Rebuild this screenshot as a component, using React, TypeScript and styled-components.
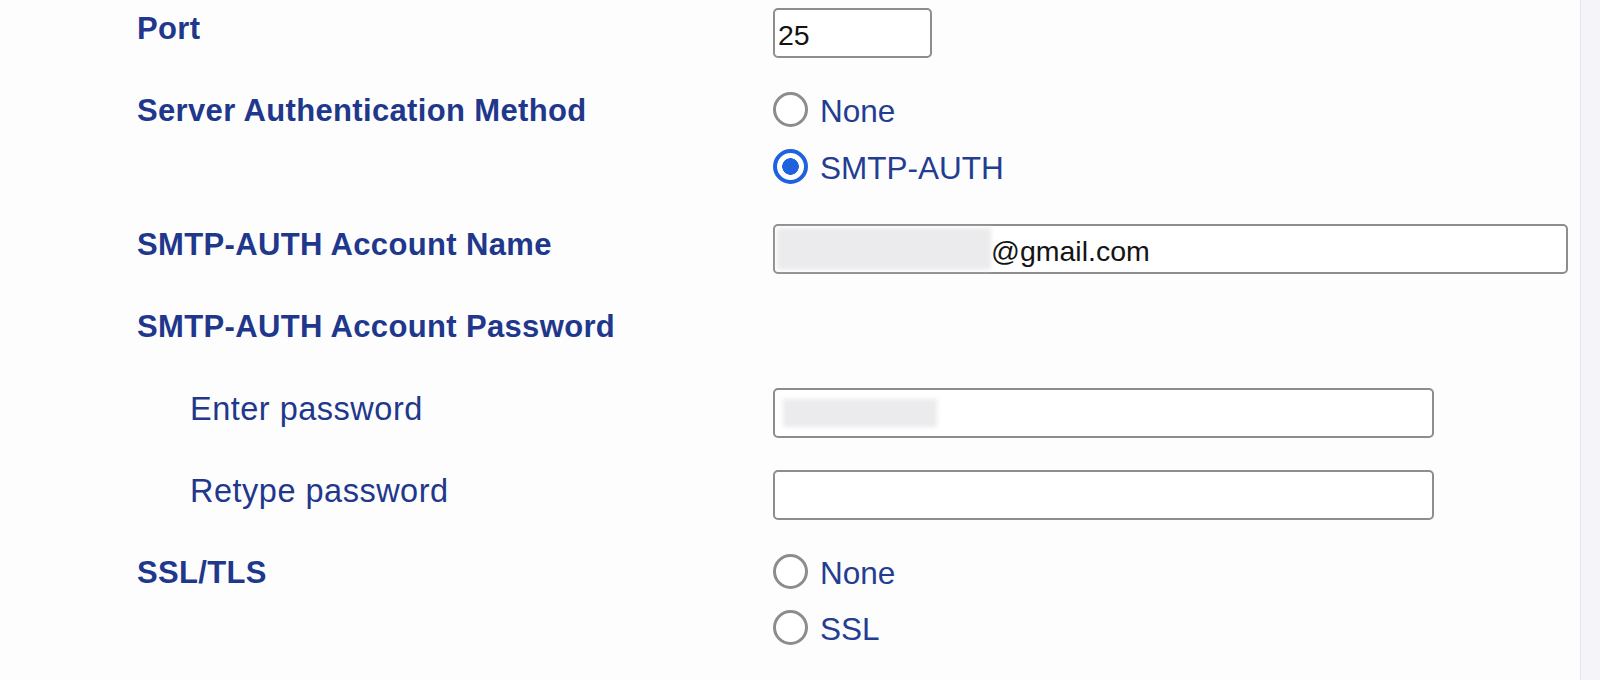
import styled, { createGlobalStyle } from 'styled-components';

const GlobalStyle = createGlobalStyle`
  html, body {
    margin: 0;
    padding: 0;
    background: #fdfdfe;
  }
  body {
    font-family: 'Liberation Sans', Arial, sans-serif;
  }
`;

const Page = styled.div`
  display: flex;
  height: 680px;
  overflow: hidden;
`;

const Form = styled.main`
  flex: 1;
  display: flex;
  flex-direction: column;
  gap: 32px;
  padding: 8px 0 0 137px;
`;

const Gutter = styled.div`
  width: 19px;
  border-left: 1px solid #e4e3e9;
  background: #f5f4f8;
`;

const Row = styled.div`
  display: flex;
  align-items: flex-start;
  min-height: 50px;
`;

const Label = styled.div<{ $sub?: boolean }>`
  box-sizing: border-box;
  width: 636px;
  flex-shrink: 0;
  padding: 3px 0 0 ${(p) => (p.$sub ? 53 : 0)}px;
  color: #1f388c;
  font-size: ${(p) => (p.$sub ? 32.5 : 31)}px;
  font-weight: ${(p) => (p.$sub ? 400 : 700)};
  letter-spacing: ${(p) => (p.$sub ? 0.5 : 0.35)}px;
  line-height: 36px;
  white-space: nowrap;
`;

const Field = styled.div<{ $width: number }>`
  box-sizing: border-box;
  width: ${(p) => p.$width}px;
  height: 50px;
  display: flex;
  align-items: center;
  padding: 4px 0 0 3px;
  border: 2px solid #8d8d8d;
  border-radius: 5px;
  background: #fff;
  color: #141414;
  font-size: 28.5px;
  line-height: 40px;
`;

const Redacted = styled.span<{ $width: number; $height: number; $offset: number }>`
  display: block;
  flex-shrink: 0;
  width: ${(p) => p.$width}px;
  height: ${(p) => p.$height}px;
  margin: -4px 0 0 ${(p) => p.$offset}px;
  background: #ebebed;
  filter: blur(2px);
`;

const RadioGroup = styled.div`
  display: flex;
  flex-direction: column;
  gap: 20.5px;
  padding: 3px 0 6px;
`;

const RadioOption = styled.label`
  display: flex;
  align-items: center;
  gap: 12px;
  height: 36px;
  color: #243d91;
  font-size: 31.5px;
  line-height: 36px;
`;

const RadioDot = styled.span<{ $checked?: boolean }>`
  box-sizing: border-box;
  width: 35px;
  height: 35px;
  margin-bottom: 3px;
  flex-shrink: 0;
  border-radius: 50%;
  border: ${(p) => (p.$checked ? '4px solid #1f62de' : '3px solid #8c8c8c')};
  background: ${(p) =>
    p.$checked ? 'radial-gradient(circle, #1f62de 0 8px, #fff 8.6px)' : '#fff'};
`;

function Radio({ label, checked }: { label: string; checked?: boolean }) {
  return (
    <RadioOption>
      <RadioDot $checked={checked} />
      {label}
    </RadioOption>
  );
}

export default function App() {
  return (
    <>
      <GlobalStyle />
      <Page>
        <Form>
          <Row>
            <Label>Port</Label>
            <Field $width={159}>25</Field>
          </Row>
          <Row>
            <Label>Server Authentication Method</Label>
            <RadioGroup>
              <Radio label="None" />
              <Radio label="SMTP-AUTH" checked />
            </RadioGroup>
          </Row>
          <Row>
            <Label>SMTP-AUTH Account Name</Label>
            <Field $width={795}>
              <Redacted $width={214} $height={42} $offset={-1} />
              @gmail.com
            </Field>
          </Row>
          <Row>
            <Label>SMTP-AUTH Account Password</Label>
          </Row>
          <Row>
            <Label $sub>Enter password</Label>
            <Field $width={661}>
              <Redacted $width={154} $height={28} $offset={5} />
            </Field>
          </Row>
          <Row>
            <Label $sub>Retype password</Label>
            <Field $width={661} />
          </Row>
          <Row>
            <Label>SSL/TLS</Label>
            <RadioGroup>
              <Radio label="None" />
              <Radio label="SSL" />
            </RadioGroup>
          </Row>
        </Form>
        <Gutter />
      </Page>
    </>
  );
}
